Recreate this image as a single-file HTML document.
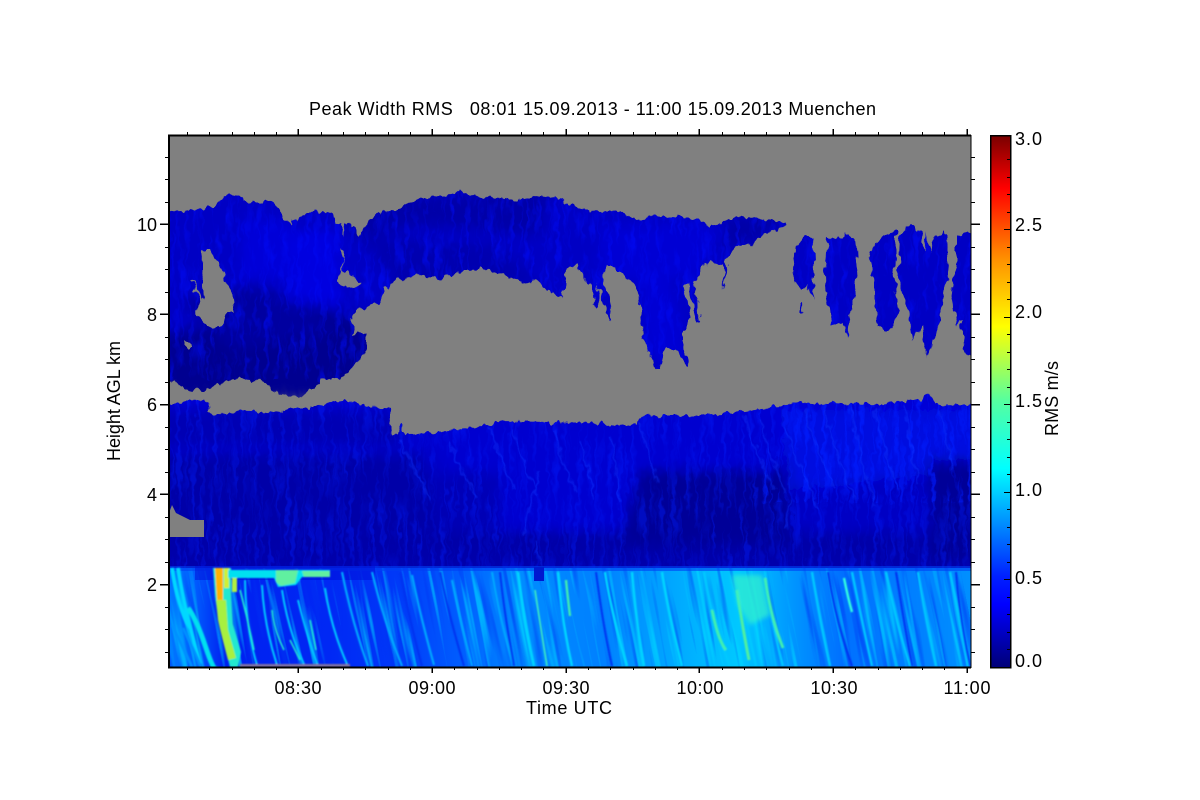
<!DOCTYPE html>
<html><head><meta charset="utf-8"><title>Peak Width RMS</title>
<style>html,body{margin:0;padding:0;background:#fff}svg{display:block}text{font-family:"Liberation Sans",Arial,sans-serif;fill:#000}</style></head>
<body>
<svg xmlns="http://www.w3.org/2000/svg" width="1200" height="800" viewBox="0 0 1200 800">
<defs>
<linearGradient id="cb" x1="0" y1="1" x2="0" y2="0">
<stop offset="0" stop-color="#000078"/><stop offset=".117" stop-color="#0000ff"/><stop offset=".17" stop-color="#0020ff"/><stop offset=".373" stop-color="#00ffff"/><stop offset=".5" stop-color="#55ffa0"/><stop offset=".64" stop-color="#ffff00"/><stop offset=".767" stop-color="#ff9000"/><stop offset=".9" stop-color="#ff0000"/><stop offset="1" stop-color="#780000"/>
</linearGradient>
<linearGradient id="low" x1="169" x2="971" y1="0" y2="0" gradientUnits="userSpaceOnUse">
<stop offset="0" stop-color="#0078ff"/><stop offset=".03" stop-color="#0060ff"/><stop offset=".07" stop-color="#0020f0"/><stop offset=".2" stop-color="#0028f4"/><stop offset=".28" stop-color="#0038f8"/><stop offset=".37" stop-color="#0060ff"/><stop offset=".44" stop-color="#008cff"/><stop offset=".54" stop-color="#0080ff"/><stop offset=".62" stop-color="#00a4ff"/><stop offset=".71" stop-color="#00c8ff"/><stop offset=".78" stop-color="#0094ff"/><stop offset=".84" stop-color="#0070ff"/><stop offset=".93" stop-color="#0080ff"/><stop offset="1" stop-color="#0090ff"/>
</linearGradient>
<linearGradient id="mid" x1="0" x2="0" y1="400" y2="568" gradientUnits="userSpaceOnUse">
<stop offset="0" stop-color="#0000d4"/><stop offset=".28" stop-color="#0000cc"/><stop offset=".5" stop-color="#0000b8"/><stop offset=".75" stop-color="#0000b4"/><stop offset=".83" stop-color="#0000a8"/><stop offset="1" stop-color="#0000ac"/>
</linearGradient>
<filter id="t1" x="0" y="0" width="1" height="1" color-interpolation-filters="sRGB">
<feTurbulence type="fractalNoise" baseFrequency=".22 .018" numOctaves="2" seed="7"/>
<feColorMatrix type="matrix" values="0 0 0 0 0  0 0 0 0 .12  0 0 0 0 1  3.4 0 0 0 -1.55"/>
</filter>
<filter id="t2" x="0" y="0" width="1" height="1" color-interpolation-filters="sRGB">
<feTurbulence type="fractalNoise" baseFrequency=".2 .03" numOctaves="2" seed="3"/>
<feColorMatrix type="matrix" values="0 0 0 0 0  0 0 0 0 .05  0 0 0 0 1  3 0 0 0 -1.4"/>
</filter>
<filter id="t3" x="0" y="0" width="1" height="1" color-interpolation-filters="sRGB">
<feTurbulence type="fractalNoise" baseFrequency=".14 .008" numOctaves="2" seed="11"/>
<feColorMatrix type="matrix" values="0 0 0 0 0  0 0 0 0 .2  0 0 0 0 .95  4 0 0 0 -2.2"/>
</filter>
<filter id="t4" x="0" y="0" width="1" height="1" color-interpolation-filters="sRGB">
<feTurbulence type="fractalNoise" baseFrequency=".16 .008" numOctaves="2" seed="23"/>
<feColorMatrix type="matrix" values="0 0 0 0 0  0 0 0 0 .88  0 0 0 0 1  4 0 0 0 -2.2"/>
</filter>
<filter id="jag" x="-2%" y="-5%" width="104%" height="110%" color-interpolation-filters="sRGB">
<feTurbulence type="fractalNoise" baseFrequency=".16 .09" numOctaves="2" seed="5" result="n"/>
<feDisplacementMap in="SourceGraphic" in2="n" scale="9" xChannelSelector="R" yChannelSelector="G"/>
</filter>
<filter id="b2"><feGaussianBlur stdDeviation="6"/></filter>
<filter id="b1"><feGaussianBlur stdDeviation=".8"/></filter>
<filter id="b3"><feGaussianBlur stdDeviation="2.5"/></filter>
<clipPath id="plot"><rect x="169" y="135" width="802" height="532"/></clipPath>
<clipPath id="lowc"><rect x="169" y="568" width="802" height="99"/></clipPath>
<clipPath id="cloud"><path d="M150 207 172 212 200 209 215 206 225 196 238 194 243 196 244 201 256 203 272 201 277 205 283 217 291 224 292 219 296 222 303 213 315 212 334 213 336 225 340 224 343 237 345 222 353 226 360 237 363 228 375 213 395 210 420 198 440 196 463 192 480 197 500 198 515 200 540 196 562 198 566 205 580 208 600 212 615 211 640 220 660 215 680 217 700 220 710 228 720 222 745 215 765 220 785 222 786 226 770 232 748 245 735 247 725 262 727 265 724 290 723 265 711 263 703 267 700 273 693 283 698 300 700 322 697 323 688 283 685 287 690 320 683 330 683 345 689 367 686 367 675 350 667 347 664 352 660 369 656 369 645 345 641 310 634 285 620 270 608 264 603 277 613 320 610 321 603 300 597 283 600 307 597 308 590 287 583 275 577 265 570 267 566 270 563 298 555 294 543 287 535 280 520 282 500 273 490 270 480 266 465 270 440 279 420 275 395 280 385 290 380 303 357 310 352 320 353 335 358 333 366 334 366 352 362 355 350 372 340 378 320 380 310 392 300 397 290 395 280 396 270 386 260 381 240 378 225 382 205 390 185 390 175 382 150 372Z
M203 250 210 250 220 265 225 280 230 290 235 312 226 312 222 328 205 326 197 315 201 300 195 290 191 280 193 281 200 295 203 300 202 285Z
M186 342 190 342 190 348 186 348Z
M339 245 345 250 342 270 355 278 362 285 358 287 345 288 338 280 343 260Z
M795 248 805 236 813 238 814 265 812 280 816 300 812 295 806 285 803 290 798 285 793 275Z
M799 304 801 304 802 314 800 314Z
M828 237 836 240 846 233 851 237 855 238 858 270 853 300 848 333 846 335 842 322 833 327 827 297 825 270Z
M867 250 872 248 880 237 897 230 895 265 893 280 900 310 895 320 890 330 883 330 877 327 872 263Z
M900 237 910 225 920 233 924 250 927 232 930 253 935 237 945 230 947 260 950 273 943 293 942 320 933 340 926 358 922 327 912 340 907 307 898 277Z
M957 237 985 225 985 372 963 350 962 317 958 327 950 287 957 267Z" clip-rule="evenodd"/></clipPath>
<clipPath id="midc"><path d="M150 414 175 405 190 400 207 401 208 414 225 415 240 410 270 413 297 408 315 408 333 402 345 400 365 406 389 409 391 436 398 435 401 425 405 435 430 433 460 429 490 425 500 421 600 423 625 426 637 424 640 416 700 415 740 412 790 405 800 402 880 405 920 399 930 393 935 405 990 404 990 680 150 680Z"/></clipPath>
</defs>
<rect width="1200" height="800" fill="#fff"/>
<g clip-path="url(#plot)">
<rect x="169" y="135" width="802" height="532" fill="#808080"/>

<!-- upper cloud -->
<g filter="url(#jag)"><g clip-path="url(#cloud)">
<rect x="150" y="180" width="840" height="200" fill="#0000c4"/>
<g filter="url(#b2)">
<path d="M165 335 300 305 370 320 370 400 165 400Z" fill="#000090"/>
<path d="M180 300 260 285 340 330 230 350Z" fill="#0000a0"/>
<path d="M350 200 550 190 540 235 420 225 350 240Z" fill="#0000a8"/>
<path d="M360 235 500 245 540 285 400 290Z" fill="#0000b0"/>
<path d="M290 230 340 230 340 305 290 300Z" fill="#0000e0"/>
<path d="M240 220 290 220 290 280 240 280Z" fill="#0000d8"/>
<path d="M600 225 720 225 700 275 600 280Z" fill="#0000d4"/>
<path d="M560 240 630 240 650 360 690 360 660 240Z" fill="#0000d4"/>
<path d="M730 215 790 215 760 240 720 250Z" fill="#0000a8"/>
</g>
<rect x="150" y="180" width="840" height="200" filter="url(#t2)" opacity=".5"/>
</g></g>

<!-- middle layer -->
<g filter="url(#jag)"><g clip-path="url(#midc)">
<rect x="150" y="393" width="840" height="180" fill="url(#mid)"/>
<g filter="url(#b2)">
<path d="M160 410 400 410 400 446 160 446Z" fill="#0000b4"/>
<path d="M160 455 420 455 440 535 160 535Z" fill="#0000a8"/>
<path d="M640 470 790 460 790 545 620 545Z" fill="#000098"/>
<path d="M440 430 780 425 780 470 440 470Z" fill="#0000d0"/>
<path d="M780 410 975 410 975 470 790 490Z" fill="#0010e0"/>
<path d="M790 490 960 480 960 530 790 530Z" fill="#0000c4"/>
<path d="M500 470 640 470 620 530 500 530Z" fill="#0000d0"/>
<path d="M930 460 980 460 980 560 930 560Z" fill="#000098"/>
</g>
<rect x="150" y="393" width="840" height="180" filter="url(#t1)" opacity=".4"/>
<rect x="760" y="393" width="220" height="110" filter="url(#t1)" opacity=".5"/>
<g fill="none" stroke="#0838ff" stroke-width="2" filter="url(#b1)" opacity=".45">
<path d="M400 440q14 30 30 60M448 440q10 24 28 58M490 428q12 34 24 62M512 430q10 30 26 66M555 430q4 30 22 62M580 440q8 26 14 60M612 436q4 30 8 68M640 422q6 30 18 60M745 416q10 40 30 74M760 420q12 40 26 74M785 430q20 50 34 80M805 408q10 40 30 80M825 410q12 50 30 90M850 408q8 40 26 100M875 410q8 40 24 80M905 405q4 40 14 80M940 410q4 20 14 60M540 470q-12 40-16 66M790 500l-4 30M535 540l6 26"/>
</g>
</g></g>
<path d="M169 513 172 505 176 513 190 520 204 520 204 537 169 537Z" fill="#808080"/>

<!-- lower layer -->
<rect x="169" y="568" width="802" height="99" fill="url(#low)"/>
<g clip-path="url(#lowc)">
<g transform="translate(0,568) skewX(11)">
<rect x="60" y="0" width="900" height="99" filter="url(#t3)" opacity=".55"/>
<rect x="60" y="0" width="900" height="99" filter="url(#t4)" opacity=".6"/>
</g>
</g>
<rect x="169" y="566" width="802" height="5" fill="#0040f4" opacity=".6"/>
<rect x="195" y="566" width="180" height="14" fill="#000cd8" opacity=".5"/>
<rect x="534" y="567" width="10" height="14" fill="#0018d0"/>
<g fill="none" filter="url(#b1)">
<!-- left section -->
<path d="M172 568q6 40 18 60M178 568q6 40 22 96" stroke="#00d8ff" stroke-width="4"/>
<path d="M188 608q8 10 18 40t12 19" stroke="#00e0f0" stroke-width="5"/>
<path d="M172 625q10 20 20 42M183 628q10 20 18 39" stroke="#0090ff" stroke-width="3"/>
<path d="M245 580q1 50 12 85M262 585q2 40 15 80M282 590q6 40 22 74M298 600q10 40 20 66M325 588q6 40 22 76" stroke="#00c8ff" stroke-width="2"/>
<path d="M240 590q8 30 14 60M272 610q2 20 12 40M310 620l6 30M290 640l10 20" stroke="#20f0d0" stroke-width="1.5"/>
<path d="M213 568h18v26l2 30 8 28 -3 15h-8l-10-40-5-30Z" fill="#20e8d0" stroke="none"/>
<path d="M216 600l10 0 2 30 8 28-8 2q-8-30-10-40Z" fill="#a8f040" stroke="none"/>
<path d="M215 568h8l0 32-6 0Z" fill="#ffb000" stroke="none"/>
<path d="M224 568h5v20h-5Z" fill="#d0f030" stroke="none"/>
<path d="M232 578h5v14h-5Z" fill="#b0f040" stroke="none"/>
<path d="M228 570h102v7h-28l-6 8-18 2-4-9h-46Z" fill="#00e0f0" stroke="none"/>
<path d="M276 570h22l-3 13-14 3-5-4ZM302 571h28v6h-26Z" fill="#60f0a0" stroke="none"/>
<rect x="240" y="664" width="110" height="3" fill="#8070a0" stroke="none"/>
<!-- streaks -->
<path d="M342 572q10 50 26 94M372 572q12 50 30 94M412 575q8 40 22 90M452 580q8 40 20 86M492 572q8 50 22 94" stroke="#00a8ff" stroke-width="2.2"/>
<path d="M518 572q6 50 16 94M558 572q4 50 14 94M605 572q6 40 22 94M632 572q4 50 12 94M662 572q6 40 20 94" stroke="#00d4ff" stroke-width="2.6"/>
<path d="M704 572q8 50 26 94M736 572q10 50 20 94M765 572q6 50 18 94M812 572q8 50 18 94M852 572q10 50 20 94M886 572q10 50 24 94M918 572q8 50 18 94M950 572q8 40 18 94" stroke="#00c8ff" stroke-width="2.4"/>
<path d="M535 590q6 40 12 76" stroke="#40f0c0" stroke-width="1.6"/>
<path d="M566 580q2 20 4 36" stroke="#40f0b0" stroke-width="2.4"/>
<path d="M737 590q6 40 12 70" stroke="#50f0a0" stroke-width="3"/>
<path d="M765 578q6 40 18 70" stroke="#40f0b0" stroke-width="3"/>
<path d="M712 610q6 30 14 40" stroke="#40f0b0" stroke-width="3"/>
<path d="M844 578q4 20 8 34" stroke="#30ffe0" stroke-width="2.4"/>
<path d="M400 572q10 50 22 94M440 572q8 40 24 94M500 572q4 40 14 94M596 572q8 60 16 94M828 572q8 50 24 94M896 572q8 50 16 94M956 572q4 50 14 94" stroke="#0030f0" stroke-width="2"/>
</g>
<path d="M732 575h30l8 40-20 10-12-20Z" fill="#30f0d0" opacity=".75" filter="url(#b3)"/>
</g>

<!-- axes -->
<g fill="none" stroke="#000" shape-rendering="crispEdges">
<path d="M168 135.500H971M168 667.500H971M169 135V668" stroke-width="2"/>
<path d="M971 135V668" stroke-width="1"/>
<path stroke-width="1.5" d="M298 135V129M432 135V129M566 135V129M699 135V129M833 135V129M967 135V129M298 667V673M432 667V673M566 667V673M699 667V673M833 667V673M967 667V673"/>
<path stroke-width="1" d="M187.500 135v-3M209.500 135v-3M232.500 135v-3M254.500 135v-3M276.500 135v-3M321.500 135v-3M343.500 135v-3M365.500 135v-3M388.500 135v-3M410.500 135v-3M454.500 135v-3M477.500 135v-3M499.500 135v-3M521.500 135v-3M543.500 135v-3M588.500 135v-3M610.500 135v-3M633.500 135v-3M655.500 135v-3M677.500 135v-3M722.500 135v-3M744.500 135v-3M766.500 135v-3M789.500 135v-3M811.500 135v-3M855.500 135v-3M878.500 135v-3M900.500 135v-3M922.500 135v-3M944.500 135v-3
M187.500 667v3M209.500 667v3M232.500 667v3M254.500 667v3M276.500 667v3M321.500 667v3M343.500 667v3M365.500 667v3M388.500 667v3M410.500 667v3M454.500 667v3M477.500 667v3M499.500 667v3M521.500 667v3M543.500 667v3M588.500 667v3M610.500 667v3M633.500 667v3M655.500 667v3M677.500 667v3M722.500 667v3M744.500 667v3M766.500 667v3M789.500 667v3M811.500 667v3M855.500 667v3M878.500 667v3M900.500 667v3M922.500 667v3M944.500 667v3"/>
<path stroke-width="1.5" d="M160 224H169M160 314H169M160 404.500H169M160 494H169M160 584.500H169M971 224H980M971 314H980M971 404.500H980M971 494H980M971 584.500H980"/>
<path stroke-width="1" d="M165 157.500h4M165 179.500h4M165 202.500h4M165 247.500h4M165 269.500h4M165 292.500h4M165 337.500h4M165 359.500h4M165 382.500h4M165 427.500h4M165 449.500h4M165 472.500h4M165 517.500h4M165 539.500h4M165 562.500h4M165 607.500h4M165 629.500h4M165 652.500h4
M971 157.500h4M971 179.500h4M971 202.500h4M971 247.500h4M971 269.500h4M971 292.500h4M971 337.500h4M971 359.500h4M971 382.500h4M971 427.500h4M971 449.500h4M971 472.500h4M971 517.500h4M971 539.500h4M971 562.500h4M971 607.500h4M971 629.500h4M971 652.500h4"/>
</g>

<!-- colorbar -->
<rect x="991" y="135" width="19" height="532" fill="url(#cb)"/>
<g fill="none" stroke="#000" shape-rendering="crispEdges">
<rect x="990.500" y="135.500" width="20" height="532" stroke-width="1.5"/>
<path stroke-width="1" d="M1010 579.500h-6M1010 492.500h-6M1010 404.500h-6M1010 317.500h-6M1010 229.500h-6M1010 649.500h-3M1010 632.500h-3M1010 614.500h-3M1010 597.500h-3M1010 562.500h-3M1010 544.500h-3M1010 527.500h-3M1010 509.500h-3M1010 474.500h-3M1010 457.500h-3M1010 439.500h-3M1010 422.500h-3M1010 387.500h-3M1010 369.500h-3M1010 352.500h-3M1010 334.500h-3M1010 299.500h-3M1010 282.500h-3M1010 264.500h-3M1010 247.500h-3M1010 212.500h-3M1010 194.500h-3M1010 177.500h-3M1010 159.500h-3"/>
</g>

<!-- text -->
<text x="309" y="115" font-size="18" textLength="567" lengthAdjust="spacing" xml:space="preserve">Peak Width RMS   08:01 15.09.2013 - 11:00 15.09.2013 Muenchen</text>
<g font-size="18" text-anchor="middle">
<text x="298" y="694" textLength="47">08:30</text>
<text x="432" y="694" textLength="47">09:00</text>
<text x="566" y="694" textLength="47">09:30</text>
<text x="700" y="694" textLength="47">10:00</text>
<text x="834" y="694" textLength="47">10:30</text>
<text x="967" y="694" textLength="47">11:00</text>
</g>
<text x="526" y="714" font-size="18" textLength="86">Time UTC</text>
<g font-size="18" text-anchor="end">
<text x="157" y="231">10</text>
<text x="157" y="321">8</text>
<text x="157" y="411">6</text>
<text x="157" y="501">4</text>
<text x="157" y="591">2</text>
</g>
<text transform="translate(120,461) rotate(-90)" font-size="18" textLength="120">Height AGL km</text>
<g font-size="18">
<text x="1015" y="145" textLength="27">3.0</text>
<text x="1015" y="231" textLength="27">2.5</text>
<text x="1015" y="318" textLength="27">2.0</text>
<text x="1015" y="407" textLength="27">1.5</text>
<text x="1015" y="496" textLength="27">1.0</text>
<text x="1015" y="584" textLength="27">0.5</text>
<text x="1015" y="667" textLength="27">0.0</text>
</g>
<text transform="translate(1058,436) rotate(-90)" font-size="18" textLength="75">RMS m/s</text>
</svg>
</body></html>
